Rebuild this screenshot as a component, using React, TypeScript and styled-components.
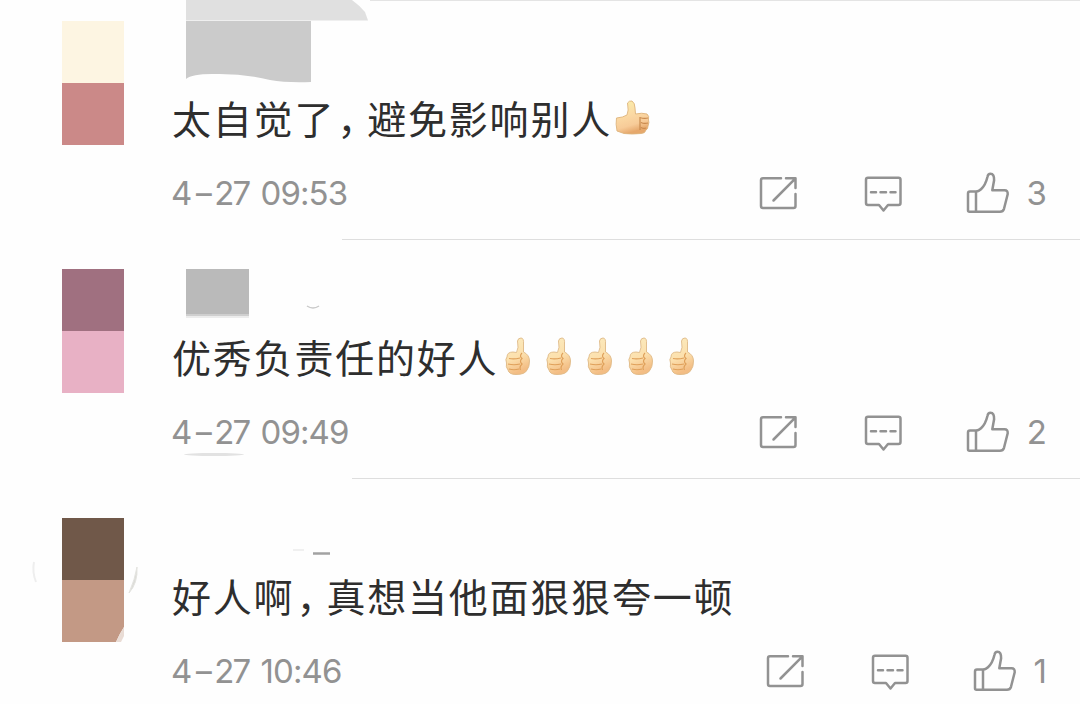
import React from "react";
import styled, { createGlobalStyle } from "styled-components";

const colors = {
  text: "#2e2e2e",
  muted: "#929292",
  line: "#dedede",
};

interface CommentData {
  text: string;
  date: string[];
  clock: string;
  likes: number;
  lineStart: number;
  footerEnd: number;
  avatar: JSX.Element;
  name: JSX.Element;
  emoji?: JSX.Element;
  emojiGap?: number;
  smudge?: boolean;
}

const ShareIcon = (): JSX.Element => (
  <Icon width="40" height="44" viewBox="0 0 40 44">
    <path d="M22 7.300H4Q2 7.300 2 9.300V35Q2 37 4 37H34.500Q36.500 37 36.500 35V23" />
    <path d="M27 7.300H36.500V17M36 7.800L14.500 29.500" />
  </Icon>
);

const CommentIcon = (): JSX.Element => (
  <Icon width="40" height="44" viewBox="0 0 40 44">
    <path d="M4 6.800H34.500Q36.500 6.800 36.500 8.800V32Q36.500 34 34.500 34H24L19.500 39.500L15 34H4Q2 34 2 32V8.800Q2 6.800 4 6.800Z" />
    <path d="M7 21.200H12M16.500 21.200H22M26.500 21.200H31.500" />
  </Icon>
);

const LikeIcon = (): JSX.Element => (
  <Icon width="44" height="44" viewBox="0 0 44 44">
    <path d="M11 20.600H4Q2 20.600 2 22.600V39.300Q2 40.800 3.500 40.800H34Q37 40.800 38 37.800L41.700 23.300Q42 19.300 38.500 19.300H26.300L28.100 9.300Q28.300 2.800 24.500 2.800Q22 2.800 21.500 5.800Q19.500 14.300 15 18.300Q12.500 20.600 10 20.600V40.800" />
  </Icon>
);

const SideThumb = (): JSX.Element => (
  <svg width="36" height="37" viewBox="0 0 36 37">
    <defs>
      <linearGradient id="side" x1="0" y1="0" x2="0.3" y2="1">
        <stop offset="0" stopColor="#faf0ac" />
        <stop offset="0.5" stopColor="#fbd9a4" />
        <stop offset="0.8" stopColor="#f7cb98" />
        <stop offset="1" stopColor="#e6a86c" />
      </linearGradient>
    </defs>
    <path
      d="M1.500 18Q8 17.500 12 15Q14 11 12.500 3Q14 0.500 17 1Q20 3 20 8L20.500 14Q27 12.500 32 14Q34.500 16 33.500 20Q34.500 22 33 26Q33 29 31 30Q30 33.500 26 33.500Q17 34.500 9 33.500L2 31Q0.500 24 1.500 18Z"
      fill="url(#side)"
      stroke="#deb37c"
      strokeWidth="0.900"
    />
    <path d="M25 17.500Q29 19 33 18M26 22.500Q29 24 33 23M26 27.500Q29 29 31 28M25 17V30" fill="none" stroke="#c98a4e" strokeWidth="1.200" />
  </svg>
);

const FrontThumb = (): JSX.Element => (
  <svg width="26" height="40" viewBox="0 0 26 40">
    <defs>
      <linearGradient id="front" x1="0" y1="0" x2="0.3" y2="1">
        <stop offset="0" stopColor="#fbecc0" />
        <stop offset="0.6" stopColor="#fce0ad" />
        <stop offset="1" stopColor="#f3bd84" />
      </linearGradient>
    </defs>
    <path
      d="M11.500 15.500Q14 11 12.500 4Q13 1 16 1Q19 1 18.500 7V15Q24.500 18 24.500 24Q24.500 30 22 33Q20 37.500 11 37.500Q4 37.500 3 33Q0.500 30 1.500 26Q0 22 2 20Q2 15 8 15Z"
      fill="url(#front)"
      stroke="#dfb986"
      strokeWidth="0.900"
    />
    <path d="M4 21.500Q9 22.500 15 21M3 27Q9 28.500 15 27M4 32Q9 33.500 14 32M17 16Q14 19 17 21.500Q14 24 17 27Q14 30 15.500 33" fill="none" stroke="#dfa05a" strokeWidth="1.200" />
  </svg>
);

const comments: CommentData[] = [
  {
    text: "太自觉了，避免影响别人",
    date: ["4", "27"],
    clock: "09:53",
    likes: 3,
    lineStart: 342,
    footerEnd: 33,
    emoji: <SideThumb />,
    emojiGap: 3,
    avatar: (
      <>
        <rect x="62" y="21" width="62" height="62" fill="#fdf5e2" />
        <rect x="62" y="83" width="62" height="62" fill="#cb8988" />
      </>
    ),
    name: (
      <>
        <path d="M14 0H180Q187 5 193 12L196 20.500H14Z" fill="#e0e0e0" />
        <path d="M14 21H139V82Q115 83 98 80Q70 73 40 74Q20 74 14 79Z" fill="#cbcbcb" />
      </>
    ),
  },
  {
    text: "优秀负责任的好人",
    date: ["4", "27"],
    clock: "09:49",
    likes: 2,
    lineStart: 352,
    footerEnd: 33,
    smudge: true,
    emojiGap: 7,
    emoji: (
      <>
        <FrontThumb />
        <FrontThumb />
        <FrontThumb />
        <FrontThumb />
        <FrontThumb />
      </>
    ),
    avatar: (
      <>
        <rect x="62" y="30" width="62" height="62" fill="#a07080" />
        <rect x="62" y="92" width="62" height="62" fill="#e8b1c5" />
      </>
    ),
    name: (
      <>
        <rect x="14" y="30" width="63" height="45" fill="#bababa" />
        <rect x="14" y="75" width="63" height="2" fill="#cfcfcf" />
        <rect x="14" y="77" width="63" height="2" fill="#ececec" />
        <path d="M135 67Q141 71 147 67" fill="none" stroke="#c9c9c9" strokeWidth="1.500" />
      </>
    ),
  },
  {
    text: "好人啊，真想当他面狠狠夸一顿",
    date: ["4", "27"],
    clock: "10:46",
    likes: 1,
    lineStart: 0,
    footerEnd: 33,
    avatar: (
      <>
        <rect x="62" y="40" width="62" height="62" fill="#705849" />
        <path d="M62 102H124V149Q120 155 116 164H62Z" fill="#c39985" />
        <path d="M124 149Q120 155 116 164H121L124 158Z" fill="#e9dcd5" />
        <path d="M137 89Q138 105 129 115Q135 101 137 89Z" fill="#dcdcd8" stroke="#e4e4e0" />
        <path d="M34 84Q32 94 36 104" fill="none" stroke="#eeeeee" strokeWidth="2" />
      </>
    ),
    name: (
      <>
        <path d="M121 72H132" stroke="#f0f0f0" strokeWidth="2" />
        <path d="M141 75.500H158" stroke="#a2a2a2" strokeWidth="2.500" />
      </>
    ),
  },
];

const Comment = ({ item }: { item: CommentData }): JSX.Element => {
  const [before, after] = item.text.split("，");
  return (
    <Row>
      <Avatar width="172" height="238">{item.avatar}</Avatar>
      <Body>
        <Name width="400" height="88">{item.name}</Name>
        <Message>
          {before}
          {after && <Comma>，</Comma>}
          {after}
          {item.emoji && <Emojis $gap={item.emojiGap}>{item.emoji}</Emojis>}
        </Message>
        <Footer $end={item.footerEnd}>
          <Time $smudge={item.smudge}>
            <Day>
              {item.date[0]}
              <Dash>-</Dash>
              {item.date[1]}
            </Day>{" "}
            {item.clock}
          </Time>
          <Actions>
            <ShareIcon />
            <CommentIcon />
            <Like>
              <LikeIcon />
              {item.likes}
            </Like>
          </Actions>
        </Footer>
      </Body>
      {item.lineStart > 0 && <Divider $start={item.lineStart} />}
    </Row>
  );
};

const App = (): JSX.Element => (
  <Page>
    <GlobalStyle />
    {comments.map((item) => (
      <Comment key={item.clock} item={item} />
    ))}
  </Page>
);

const GlobalStyle = createGlobalStyle`
  body {
    margin: 0;
    background: #fefefe;
    overflow: hidden;
  }
`;

const Page = styled.div`
  box-sizing: border-box;
  width: 1080px;
  height: 704px;
  overflow: hidden;
  background: linear-gradient(#e4e4e4, #e4e4e4) 370px 0 / 710px 1px no-repeat #fefefe;
`;

const Row = styled.div`
  display: grid;
  grid-template-columns: 172px 1fr;
  grid-template-rows: 239px 1px;
  height: 240px;
  margin-bottom: -1px;
`;

const Avatar = styled.svg`
  display: block;
`;

const Body = styled.div`
  display: flex;
  flex-direction: column;
`;

const Name = styled.svg`
  display: block;
  flex: none;
`;

const Message = styled.div`
  display: flex;
  align-items: center;
  height: 59px;
  color: ${colors.text};
  font: 39px/59px "Noto Sans CJK SC", sans-serif;
  letter-spacing: 1.8px;
  white-space: nowrap;
`;

const Comma = styled.span`
  width: 30px;
  padding-left: 2px;
  font-feature-settings: "halt";
`;

const Emojis = styled.span<{ $gap?: number }>`
  display: flex;
  align-items: center;
  gap: 15px;
  margin-left: ${(p) => p.$gap}px;
  padding-top: 1px;
`;

const Footer = styled.div<{ $end: number }>`
  display: flex;
  align-items: center;
  justify-content: space-between;
  height: 92px;
  padding-right: ${(p) => p.$end}px;
  color: ${colors.muted};
  font: 33px/44px Inter, sans-serif;
`;

const Time = styled.span<{ $smudge?: boolean }>`
  position: relative;
  letter-spacing: -0.9px;
  white-space: nowrap;

  &::after {
    content: "";
    display: ${(p) => (p.$smudge ? "block" : "none")};
    position: absolute;
    left: 12px;
    top: 43px;
    width: 60px;
    height: 3px;
    border-radius: 50%;
    background: #e2e2e2;
  }
`;

const Day = styled.span`
  margin-left: -1px;
  margin-right: 3px;
  letter-spacing: -2px;
`;

const Dash = styled.span`
  display: inline-block;
  width: 24px;
  text-align: center;
  transform: translateX(0.5px) scaleX(1.5);
`;

const Actions = styled.div`
  display: flex;
  align-items: center;
  gap: 65px;
`;

const Like = styled.span`
  display: flex;
  align-items: center;
  gap: 17px;
  margin-left: -3px;
`;

const Icon = styled.svg`
  fill: none;
  stroke: ${colors.muted};
  stroke-width: 2.5;
  stroke-linecap: round;
  stroke-linejoin: round;
`;

const Divider = styled.div<{ $start: number }>`
  grid-column: 1 / -1;
  margin-left: ${(p) => p.$start}px;
  background: ${colors.line};
`;

export default App;
